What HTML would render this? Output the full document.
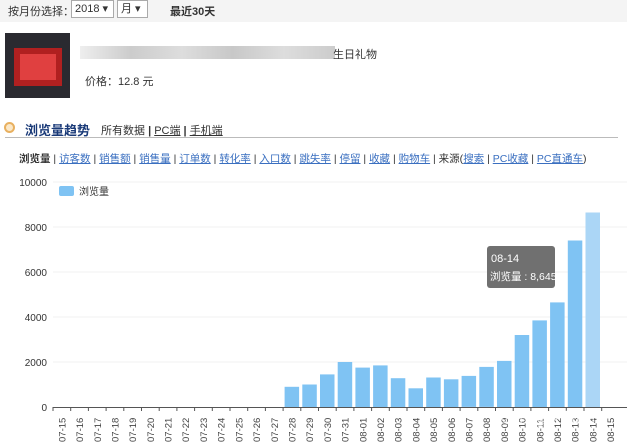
<!DOCTYPE html>
<html><head><meta charset="utf-8"><style>
body{margin:0;width:627px;height:444px;overflow:hidden;background:#fff;font-family:"Liberation Sans","Noto Sans CJK SC",sans-serif;font-size:11px;color:#333;position:relative}
.a{position:absolute;white-space:nowrap}
.sel{position:absolute;top:0;height:16px;border:1px solid #aaa;background:#fff;font-size:11px;line-height:16px;padding-left:3px}
a{color:#3a6fc0;text-decoration:underline}
</style></head><body>
<div class="a" style="left:0;top:0;width:627px;height:22px;background:#f4f4f4"></div>
<div class="a" style="left:8px;top:3px">按月份选择：</div>
<div class="sel" style="left:71px;top:0;width:38px">2018 ▾</div>
<div class="sel" style="left:117px;top:0;width:26px">月 ▾</div>
<div class="a" style="left:170px;top:3px;font-weight:bold">最近30天</div>
<div class="a" style="left:5px;top:33px;width:65px;height:65px;background:#2a2a30"></div>
<div class="a" style="left:14px;top:48px;width:48px;height:38px;background:#b02020"></div>
<div class="a" style="left:20px;top:54px;width:36px;height:26px;background:#e04040"></div>
<div class="a" style="left:80px;top:46px;width:255px;height:13px;background:linear-gradient(90deg,#eee,#ccc 20%,#ddd 40%,#c8c8c8 60%,#ddd 80%,#ccc)"></div>
<div class="a" style="left:333px;top:46px">生日礼物</div>
<div class="a" style="left:85px;top:73px">价格：12.8 元</div>
<div class="a" style="left:4px;top:122px;width:7px;height:7px;border-radius:50%;border:2px solid #e8b060;background:#fbe8c8"></div>
<div class="a" style="left:25px;top:120px;font-size:13px;font-weight:bold;color:#1a3a78">浏览量趋势</div>
<div class="a" style="left:101px;top:122px">所有数据 <b>|</b> <span style="text-decoration:underline">PC端</span> <b>|</b> <span style="text-decoration:underline">手机端</span></div>
<div class="a" style="left:5px;top:137px;width:613px;height:1px;background:#bbb"></div>
<div class="a" style="left:19px;top:151px;font-size:10.5px"><b>浏览量</b> | <a>访客数</a> | <a>销售额</a> | <a>销售量</a> | <a>订单数</a> | <a>转化率</a> | <a>入口数</a> | <a>跳失率</a> | <a>停留</a> | <a>收藏</a> | <a>购物车</a> | 来源(<a>搜索</a> | <a>PC收藏</a> | <a>PC直通车</a>)</div>
<svg class="a" style="left:0;top:170px" width="627" height="274" font-family="Liberation Sans" font-size="10" fill="#333">
<g stroke="#f2f2f2">
<line x1="53" y1="12" x2="627" y2="12"/><line x1="53" y1="57" x2="627" y2="57"/><line x1="53" y1="102" x2="627" y2="102"/><line x1="53" y1="147" x2="627" y2="147"/><line x1="53" y1="192" x2="627" y2="192"/>
</g>
<g text-anchor="end"><text x="47" y="16">10000</text><text x="47" y="61">8000</text><text x="47" y="106">6000</text><text x="47" y="151">4000</text><text x="47" y="196">2000</text><text x="47" y="241">0</text></g>
<rect x="59" y="16" width="15" height="10" rx="2" fill="#7fc3f3"/><text x="79" y="25" font-family="Liberation Sans,Noto Sans CJK SC">浏览量</text>
<g fill="#7fc3f3" id="bars"></g>
<line x1="53" y1="237.5" x2="627" y2="237.5" stroke="#555"/>
<g id="lab" font-size="9.5" fill="#444"></g>
<rect x="487" y="76" width="68" height="42" rx="3" fill="#707070"/>
<text x="491" y="92" fill="#fff" font-size="11">08-14</text>
<text x="490" y="110" fill="#fff" font-size="10.5" font-family="Liberation Sans,Noto Sans CJK SC">浏览量 : 8,645</text>
<text x="497" y="253" fill="#fff" fill-opacity="0.7" font-size="16" font-family="Noto Sans CJK SC,sans-serif">知乎 @花和尚</text>
</svg>
<script>
var v=[0,0,0,0,0,0,0,0,0,0,0,0,0,900,1000,1450,2000,1750,1850,1280,830,1310,1230,1380,1780,2050,3200,3850,4650,7400,8645];
var b='',l='';
for(var i=0;i<32;i++){var x=53+i*17.7;
if(i<31&&v[i]){var h=v[i]*0.0225;b+='<rect x="'+(x+1.5).toFixed(1)+'" y="'+(237-h).toFixed(1)+'" width="14.5" height="'+h.toFixed(1)+'"'+(i==30?' fill="#abd6f6"':'')+'/>';}
var d=i<17?'07-'+(15+i):'08-'+('0'+(i-16)).slice(-2);
var cx=x+8.85;
l+='<line x1="'+x.toFixed(1)+'" y1="237" x2="'+x.toFixed(1)+'" y2="241" stroke="#555"/>';
l+='<text transform="translate('+(cx+3.5).toFixed(1)+',272) rotate(-90)">'+d+'</text>';}
document.getElementById('bars').innerHTML=b;document.getElementById('lab').innerHTML=l;
</script>
</body></html>
